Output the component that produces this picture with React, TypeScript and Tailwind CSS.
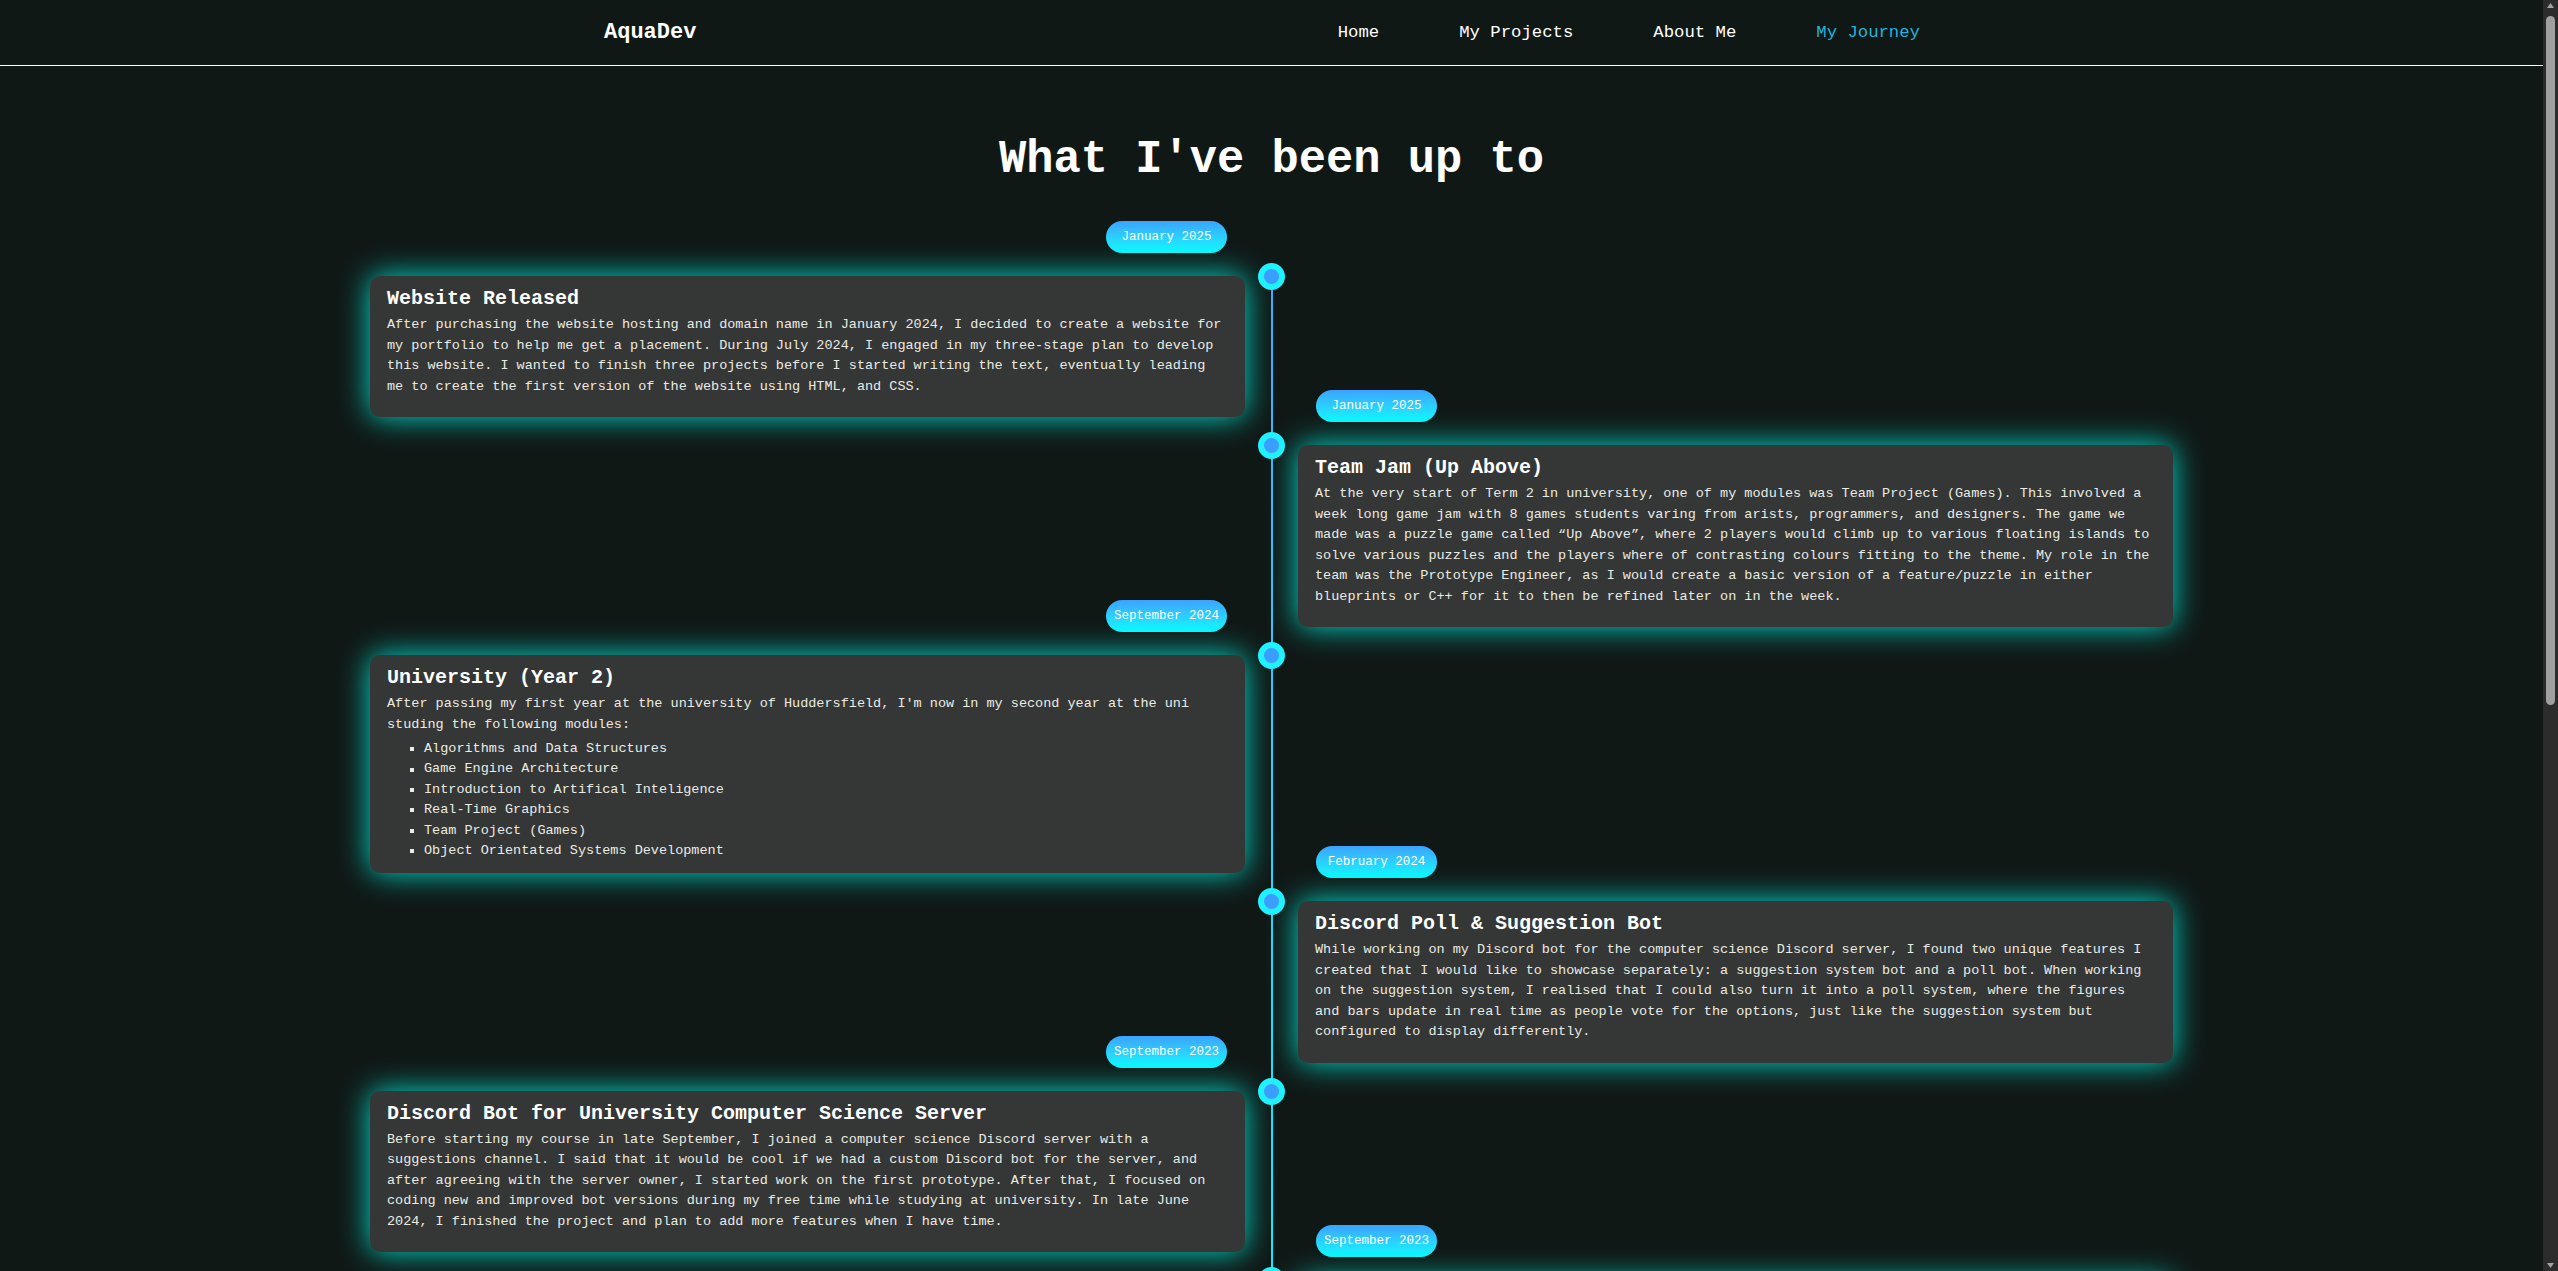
import clsx from 'clsx'

type Entry = {
  date: string
  title: string
  body: string
  list?: string[]
  side: 'left' | 'right'
}

const entries: Entry[] = [
  {
    date: 'January 2025',
    title: 'Website Released',
    side: 'left',
    body: 'After purchasing the website hosting and domain name in January 2024, I decided to create a website for my portfolio to help me get a placement. During July 2024, I engaged in my three-stage plan to develop this website. I wanted to finish three projects before I started writing the text, eventually leading me to create the first version of the website using HTML, and CSS.',
  },
  {
    date: 'January 2025',
    title: 'Team Jam (Up Above)',
    side: 'right',
    body: 'At the very start of Term 2 in university, one of my modules was Team Project (Games). This involved a week long game jam with 8 games students varing from arists, programmers, and designers. The game we made was a puzzle game called “Up Above”, where 2 players would climb up to various floating islands to solve various puzzles and the players where of contrasting colours fitting to the theme. My role in the team was the Prototype Engineer, as I would create a basic version of a feature/puzzle in either blueprints or C++ for it to then be refined later on in the week.',
  },
  {
    date: 'September 2024',
    title: 'University (Year 2)',
    side: 'left',
    body: "After passing my first year at the university of Huddersfield, I'm now in my second year at the uni studing the following modules:",
    list: [
      'Algorithms and Data Structures',
      'Game Engine Architecture',
      'Introduction to Artifical Inteligence',
      'Real-Time Graphics',
      'Team Project (Games)',
      'Object Orientated Systems Development',
    ],
  },
  {
    date: 'February 2024',
    title: 'Discord Poll & Suggestion Bot',
    side: 'right',
    body: 'While working on my Discord bot for the computer science Discord server, I found two unique features I created that I would like to showcase separately: a suggestion system bot and a poll bot. When working on the suggestion system, I realised that I could also turn it into a poll system, where the figures and bars update in real time as people vote for the options, just like the suggestion system but configured to display differently.',
  },
  {
    date: 'September 2023',
    title: 'Discord Bot for University Computer Science Server',
    side: 'left',
    body: 'Before starting my course in late September, I joined a computer science Discord server with a suggestions channel. I said that it would be cool if we had a custom Discord bot for the server, and after agreeing with the server owner, I started work on the first prototype. After that, I focused on coding new and improved bot versions during my free time while studying at university. In late June 2024, I finished the project and plan to add more features when I have time.',
  },
  {
    date: 'September 2023',
    title: 'University (Year 1)',
    side: 'right',
    body: 'After finishing college, I started my first year at the university of Huddersfield, studying Computer Science with Games Programming and the following modules:',
    list: [
      'Computer Systems',
      'Programming for Games',
      'Mathematics for Computer Science',
      'Games Development',
      'Software Engineering',
      'Web Technologies',
    ],
  },
  {
    date: 'June 2023',
    title: 'College Final Project',
    side: 'left',
    body: 'For the final project of my college course I created a small 2D platformer in Unity, planning the levels, writing the player controller in C# and testing it with other students before handing it in.',
  },
  {
    date: 'September 2021',
    title: 'College',
    side: 'right',
    body: 'I started a two year course in Games Development at college, where I learnt the basics of programming, game design and 3D modelling, which led me to apply for computer science at university.',
  },
]

function TimelineItem({ entry, first }: { entry: Entry; first: boolean }) {
  const left = entry.side === 'left'

  const card = (
    <div className={clsx('flex flex-col', left ? 'items-end' : 'items-start')}>
      <span className="mx-[18px] flex h-[32px] w-[121px] items-center justify-center rounded-full bg-linear-to-b from-[#3ba2ff] to-[#00fbff] text-[12.5px] text-white">
        {entry.date}
      </span>
      <div
        className={clsx(
          'mt-[23px] w-full rounded-[10px] bg-[#343736] px-[17px] pt-[11px] shadow-[0_0_30px_rgba(0,250,235,0.88)]',
          entry.list ? 'pb-[12px]' : 'pb-[16px]'
        )}
      >
        <h3 className="text-[20px] font-bold leading-[24px] text-white">{entry.title}</h3>
        <p className="mt-[4px] mb-[4px] text-[13.5px] leading-[20.5px] text-[#ebebe4]">{entry.body}</p>
        {entry.list && (
          <ul className="text-[13.5px] leading-[20.4px] text-[#ebebe4]">
            {entry.list.map((item) => (
              <li key={item} className="flex items-center pl-[23px]">
                <span className="mr-[10px] h-[4px] w-[4px] shrink-0 bg-[#ebebe4]" />
                {item}
              </li>
            ))}
          </ul>
        )}
      </div>
    </div>
  )

  return (
    <div className={clsx('grid grid-cols-[875px_53px_875px]', !first && '-mt-[27px]')}>
      {left ? card : <div />}
      <div className="flex justify-center pt-[42px]">
        <span className="relative z-10 h-[27px] w-[27px] rounded-full border-[6.5px] border-[#1ff1ff] bg-[#3b9dff]" />
      </div>
      {left ? <div /> : card}
    </div>
  )
}

function Scrollbar() {
  return (
    <div className="flex w-[15px] shrink-0 flex-col items-center bg-[#2c2c2c]">
      <svg width="9" height="16" viewBox="0 0 9 16" className="shrink-0">
        <path d="M4.5 3 L8 8 L1 8 Z" fill="#a3a3a3" />
      </svg>
      <div className="h-[689px] w-[9px] rounded-full bg-[#a0a0a0]" />
      <div className="flex-1" />
      <svg width="9" height="16" viewBox="0 0 9 16" className="shrink-0">
        <path d="M1 8 L8 8 L4.5 13 Z" fill="#a3a3a3" />
      </svg>
    </div>
  )
}

export default function App() {
  return (
    <div className="flex h-screen bg-[#101816] text-white [font-family:'Liberation_Mono','Courier_New',monospace]">
      <main className="min-w-0 flex-1 overflow-y-auto [scrollbar-width:none]">
        <nav className="flex h-[66px] items-center justify-between border-b border-white pr-[623px] pl-[604px]">
          <span className="text-[22px] font-bold">AquaDev</span>
          <ul className="flex gap-[80px] text-[17.3px]">
            <li>Home</li>
            <li>My Projects</li>
            <li>About Me</li>
            <li className="text-[#20b4dc]">My Journey</li>
          </ul>
        </nav>

        <h1 className="mt-[67px] text-center text-[45.4px] font-bold leading-[54px]">What I've been up to</h1>

        <div className="relative mx-auto mt-[34px] w-[1803px] pb-[280px]">
          <div className="absolute top-[55px] bottom-[280px] left-1/2 w-[2px] -translate-x-1/2 bg-linear-to-b from-[#3fa9ff] via-[#14e2ff] via-50% to-[#00ffff]" />
          {entries.map((entry, i) => (
            <TimelineItem key={entry.title} entry={entry} first={i === 0} />
          ))}
        </div>
      </main>
      <Scrollbar />
    </div>
  )
}
